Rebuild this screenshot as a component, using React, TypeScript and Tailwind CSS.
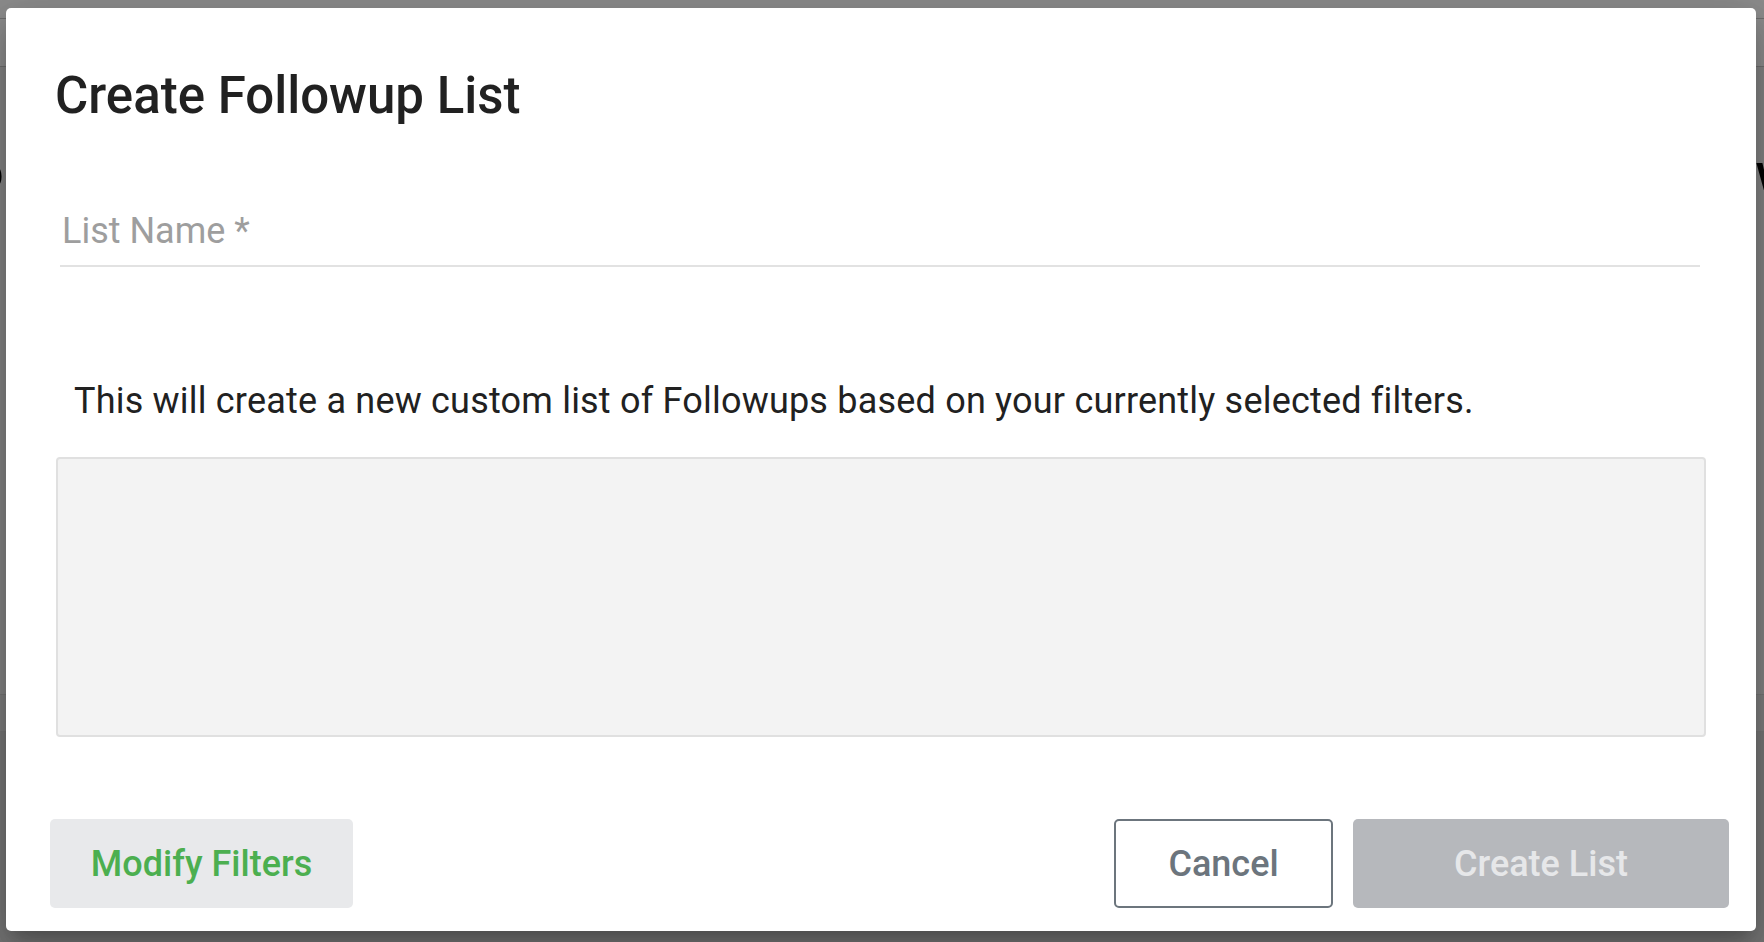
import React from "react";

function PageBehind() {
  return (
    <div className="flex h-full w-full flex-col bg-[#eeeeee]">
      <div className="h-[18px] bg-white" />
      <div className="h-[49px] border-t border-b border-[#c8c8c8] bg-white" />
      <div className="flex h-[140px] items-end justify-between overflow-hidden pb-[8px]">
        <span className="-ml-[26px] text-[52px] leading-none font-medium text-black">o</span>
        <span className="-mr-[30px] text-[52px] leading-none font-medium text-black">w</span>
      </div>
      <div className="h-[487px]" />
      <div className="h-[38px] border-t border-b border-[#d6d6d6] bg-[#e4e4e4]" />
      <div className="flex-1 bg-[#d8d8d8]" />
    </div>
  );
}

function ListNameField() {
  return (
    <div className="ml-[54px] mr-[56px] mt-[92px] border-b-2 border-[#e2e2e2] pb-[16px]">
      <div className="pl-[2px] text-[36px] leading-[36px] text-[#9e9e9e]">List Name *</div>
    </div>
  );
}

function FooterButtons() {
  return (
    <div className="mt-[82px] flex items-center justify-between pl-[44px] pr-[27px]">
      <button className="flex h-[89px] w-[303px] items-center justify-center rounded-[5px] bg-[#e8e9eb] text-[36px] font-medium text-[#4caf50]">
        Modify Filters
      </button>
      <div className="flex items-center gap-[20px]">
        <button className="flex h-[89px] w-[219px] items-center justify-center rounded-[5px] border-2 border-[#6c757d] bg-white text-[36px] font-medium text-[#6c757d]">
          Cancel
        </button>
        <button className="flex h-[89px] w-[376px] items-center justify-center rounded-[5px] bg-[#b6b8bc] text-[36px] font-medium text-[#e6e7e9]">
          Create List
        </button>
      </div>
    </div>
  );
}

export default function App() {
  return (
    <div className="relative h-[942px] w-[1764px] overflow-hidden font-['Roboto',sans-serif]">
      <PageBehind />
      <div className="absolute inset-0 flex items-start bg-black/45 pl-[6px] pt-[8px]">
        <div className="flex h-[923px] w-[1750px] flex-col rounded-[5px] bg-white shadow-[0_11px_15px_-7px_rgba(0,0,0,0.2),0_24px_38px_3px_rgba(0,0,0,0.14),0_9px_46px_8px_rgba(0,0,0,0.12)]">
          <h1 className="ml-[49px] mt-[63px] text-[51px] leading-[50px] font-medium text-[#212121]">
            Create Followup List
          </h1>
          <ListNameField />
          <p className="ml-[68px] mt-[116px] text-[36px] leading-[36px] tracking-[0.2px] text-[#212121]">
            This will create a new custom list of Followups based on your currently selected filters.
          </p>
          <div className="ml-[50px] mr-[50px] mt-[38px] h-[280px] rounded-[4px] border-2 border-[#e0e0e0] bg-[#f3f3f3]" />
          <FooterButtons />
        </div>
      </div>
    </div>
  );
}
